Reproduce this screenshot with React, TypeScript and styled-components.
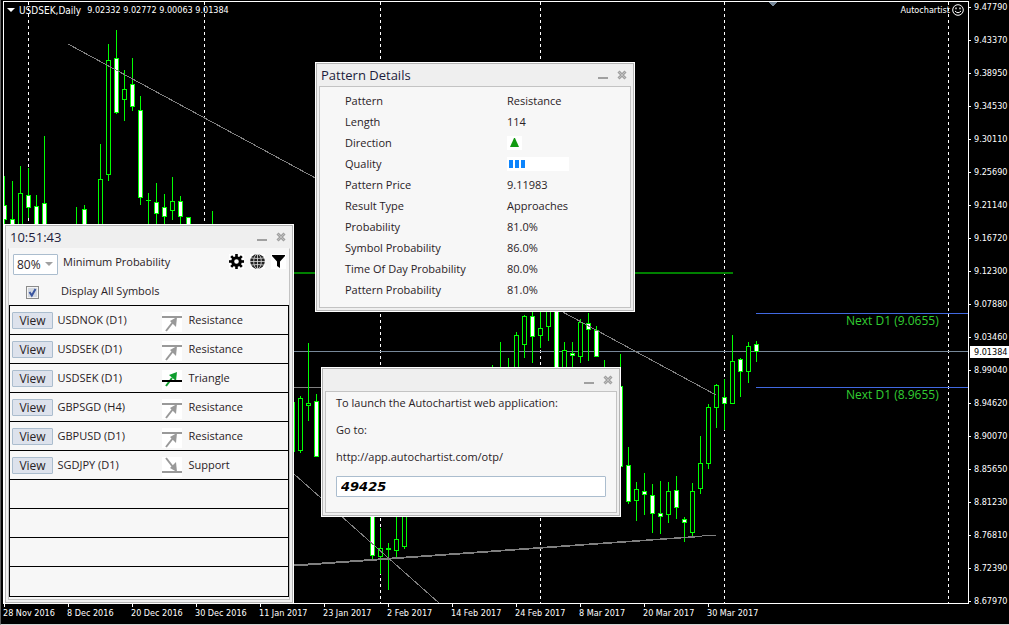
import React from 'react';
import styled, { createGlobalStyle } from 'styled-components';

const UI_FONT = "'Open Sans', 'Noto Sans', sans-serif";
const AXIS_FONT = "'DejaVu Sans Condensed', 'DejaVu Sans', sans-serif";

const GlobalStyle = createGlobalStyle`
  *, *::before, *::after { box-sizing: border-box; }
  html, body { margin: 0; background: #000; }
`;

/* ---------- chart ---------- */

type Candle = [x: number, high: number, low: number, top: number, bottom: number, bear?: 1];

const CANDLES: Candle[] = [
  [4, 176, 260, 205, 220, 1], [12, 181, 260, 219, 260, 1], [20, 166, 260, 193, 260],
  [28, 168, 218, 195, 208, 1], [36, 195, 260, 206, 260, 1], [44, 136, 260, 203, 260, 1],
  [76, 207, 260, 240, 260], [84, 205, 260, 209, 260, 1], [100, 144, 260, 179, 260],
  [108, 44, 181, 60, 175], [116, 30, 114, 58, 113, 1], [124, 70, 121, 89, 100],
  [132, 58, 111, 84, 107, 1], [140, 96, 205, 110, 198, 1], [148, 193, 260, 200, 201],
  [156, 183, 260, 202, 214, 1], [164, 194, 260, 207, 217, 1], [172, 177, 220, 201, 211],
  [180, 196, 260, 201, 217, 1], [188, 217, 260, 217, 260, 1], [212, 211, 260, 240, 260],
  [292, 390, 460, 402, 452], [300, 396, 453, 398, 451], [308, 343, 421, 403, 406],
  [316, 394, 457, 401, 457, 1], [372, 480, 559, 490, 556, 1], [380, 528, 574, 548, 557],
  [388, 543, 590, 548, 550], [396, 480, 559, 539, 551], [404, 480, 549, 490, 547],
  [492, 365, 400, 380, 390], [500, 342, 400, 380, 390], [508, 358, 400, 380, 390],
  [516, 332, 400, 335, 390], [524, 315, 358, 316, 345], [532, 300, 363, 316, 337, 1],
  [540, 300, 348, 328, 336], [548, 300, 341, 305, 327], [556, 300, 400, 305, 390, 1],
  [564, 342, 400, 350, 390], [572, 342, 400, 353, 356, 1], [580, 319, 363, 322, 357],
  [588, 313, 361, 323, 330, 1], [596, 326, 357, 330, 357, 1], [604, 360, 400, 380, 390],
  [620, 354, 467, 386, 467, 1], [628, 447, 504, 465, 502, 1], [636, 482, 521, 489, 501],
  [644, 473, 515, 491, 495, 1], [652, 484, 533, 495, 514, 1], [660, 481, 534, 513, 517, 1],
  [668, 482, 523, 491, 515], [676, 476, 519, 490, 508, 1], [684, 517, 542, 519, 523, 1],
  [692, 483, 538, 491, 533], [700, 436, 494, 463, 489], [708, 404, 469, 407, 464],
  [716, 384, 428, 385, 408], [724, 379, 430, 397, 404, 1], [732, 335, 404, 361, 404],
  [740, 358, 397, 359, 372, 1], [748, 342, 383, 346, 372], [756, 341, 362, 344, 352, 1],
];

const SEPARATORS = [28, 204, 380, 540, 724, 948];

const PRICES = [
  '9.47790', '9.43370', '9.38950', '9.34530', '9.30110', '9.25690', '9.21140', '9.16720', '9.12300',
  '9.07880', '9.03460', '8.99040', '8.94620', '8.90070', '8.85650', '8.81230', '8.76810', '8.72390', '8.67970',
];

const DATES = [
  '28 Nov 2016', '8 Dec 2016', '20 Dec 2016', '30 Dec 2016', '11 Jan 2017', '23 Jan 2017',
  '2 Feb 2017', '14 Feb 2017', '24 Feb 2017', '8 Mar 2017', '20 Mar 2017', '30 Mar 2017',
];

const Terminal = styled.main`
  position: relative;
  display: grid;
  grid-template-columns: minmax(0, 1fr) 40px;
  grid-template-rows: minmax(602px, 1fr) 20px;
  min-height: 100vh;
  padding: 1px 0 0 2px;
  overflow: hidden;
  border-left: 1px solid #5f5f5f;
  border-bottom: 1px solid #d4d4d4;
  background: #000;
  color: #fff;
  font: 9px/13px ${AXIS_FONT};
`;

const Plot = styled.section`
  position: relative;
  border: 1px solid #fff;
  overflow: hidden;
`;

const ChartSvg = styled.svg`
  position: absolute;
  inset: 0;
  width: 100%;
  height: 100%;
`;

const PlotHeader = styled.header`
  position: relative;
  display: flex;
  align-items: center;
  height: 16px;
  padding: 0 4px 0 3px;
  white-space: pre;
`;

const Expert = styled.div`
  display: flex;
  align-items: center;
  gap: 2px;
  margin-left: auto;
`;

const HeaderTitle = styled.h1`
  margin: 0 6px 0 4px;
  font: inherit;
  font-size: 10px;
`;

const PriceAxis = styled.div`
  position: relative;
  grid-row: 1 / -1;
  grid-column: 2;
  overflow: hidden;
`;

const PriceTick = styled.div`
  display: flex;
  align-items: center;
  gap: 3px;
  height: 12px;

  & + & { margin-top: 21px; }

  &::before {
    content: '';
    width: 2px;
    height: 1px;
    background: #fff;
  }
`;

const CurrentPrice = styled.output`
  position: absolute;
  top: 345px;
  left: 1px;
  right: 0;
  padding-left: 4px;
  background: #fff;
  color: #000;
  line-height: 12px;
`;

const TimeAxis = styled.div`
  grid-row: 2;
  grid-column: 1;
  display: flex;
  overflow: hidden;
`;

const TimeTick = styled.div`
  flex: 0 0 64px;
  white-space: nowrap;

  &::before {
    content: '';
    display: block;
    width: 1px;
    height: 3px;
    margin-left: 1px;
    background: #fff;
  }
`;

function CandleMark({ candle }: { candle: Candle }) {
  const [x, high, low, top, bottom, bear] = candle;
  return (
    <g>
      <rect x={x} y={high} width={1} height={low - high} fill="#0f0" />
      <rect x={x - 2} y={top} width={5} height={bottom - top} fill="#0f0" />
      {bottom - top > 2 && (
        <rect x={x - 1} y={top + 1} width={3} height={bottom - top - 2} fill={bear ? '#fff' : '#000'} />
      )}
    </g>
  );
}

function Chart() {
  return (
    <ChartSvg aria-hidden="true">
      <g transform="translate(-4 -2)" shapeRendering="crispEdges">
        {SEPARATORS.map((x) => (
          <line key={x} x1={x + 0.5} x2={x + 0.5} y1={2} y2="110%" stroke="#fff" strokeDasharray="3 3" />
        ))}
        <rect x={4} y={351} width="100%" height={1} fill="#778899" />
        <rect x={4} y={387} width={320} height={1} fill="#808080" />
        {CANDLES.map((c) => <CandleMark key={c[0]} candle={c} />)}
        <rect x={4} y={272} width={729} height={2} fill="#008000" />
        <rect x={756} y={313} width="100%" height={1} fill="#4169e1" />
        <rect x={756} y={387} width="100%" height={1} fill="#4169e1" />
        <g stroke="#808080">
          <line x1={68} y1={44} x2={716} y2={395} />
          <line x1={294} y1={474} x2={439} y2={603} />
          <line x1={294} y1={565} x2={716} y2={535} />
          <line x1={294} y1={566} x2={695} y2={537} />
        </g>
        <path d="M769 2h8l-4 5z" fill="#778899" />
      </g>
      <g fill="#32cd32" fontFamily={UI_FONT} fontSize={12}>
        <text x={842} y={323}>Next D1 (9.0655)</text>
        <text x={842} y={397}>Next D1 (8.9655)</text>
      </g>
    </ChartSvg>
  );
}

function Smiley() {
  return (
    <svg width="12" height="12" viewBox="0 0 12 12" fill="none" stroke="#fff" aria-hidden="true">
      <circle cx="6" cy="6" r="5.3" />
      <path d="M3 7q3 3.4 6 0" />
      <path d="M4 3.6v1.6M8 3.6v1.6" strokeWidth="1.3" />
    </svg>
  );
}

/* ---------- floating windows ---------- */

const Frame = styled.section<{ $x: number; $y: number; $w: number }>`
  position: absolute;
  left: ${(p) => p.$x}px;
  top: ${(p) => p.$y}px;
  width: ${(p) => p.$w}px;
  padding: 0 2px 2px;
  border: 1px solid #b4b4b4;
  outline: 1px solid #fff;
  background: #efefef;
  color: #2a2226;
  font: 11px/15px ${UI_FONT};
`;

const TitleBar = styled.header`
  display: flex;
  align-items: center;
  gap: 9px;
  height: 22px;
  padding: 0 4px 0 2px;
`;

const Title = styled.h2`
  flex: 1;
  margin: 0;
  color: #1c1c3c;
  font-size: 13px;
  font-weight: 400;
  line-height: 18px;
`;

const TitleButton = styled.button`
  display: flex;
  padding: 0;
  border: 0;
  background: none;
  color: #a0a0a0;
`;

const Pane = styled.div<{ $open?: boolean }>`
  border: 1px solid #c3c3c3;
  border-top-color: ${(p) => (p.$open ? '#f7f7f7' : '#c3c3c3')};
  background: #f7f7f7;
`;

function FloatingWindow(props: {
  title: string; label?: string; x: number; y: number; w: number; open?: boolean; children: React.ReactNode;
}) {
  return (
    <Frame $x={props.x} $y={props.y} $w={props.w} aria-label={props.label ?? props.title}>
      <TitleBar>
        <Title>{props.title}</Title>
        <TitleButton aria-label="Minimize">
          <svg width="10" height="10" viewBox="0 0 10 10"><path d="M0 7h10v2H0z" fill="currentColor" /></svg>
        </TitleButton>
        <TitleButton aria-label="Close">
          <svg width="10" height="10" viewBox="0 0 10 10">
            <path d="M1.5 1.5l7 7m0-7l-7 7" stroke="currentColor" strokeWidth="3" />
            <path d="M2 2l6 6m0-6L2 8" stroke="#d2d2d2" strokeWidth="0.6" />
          </svg>
        </TitleButton>
      </TitleBar>
      <Pane $open={props.open}>{props.children}</Pane>
    </Frame>
  );
}

/* ---------- pattern list ---------- */

const Filters = styled.div`
  display: flex;
  align-items: flex-start;
  height: 31px;
  padding: 5px 3px 0 4px;
`;

const SelectBox = styled.div`
  position: relative;
  width: 45px;
  height: 21px;
  margin-right: 5px;

  svg {
    position: absolute;
    top: 8px;
    right: 5px;
    pointer-events: none;
  }
`;

const Select = styled.select`
  appearance: none;
  width: 100%;
  height: 100%;
  padding: 0 0 0 3px;
  border: 1px solid #abbdce;
  border-radius: 1px;
  background: #fff;
  color: #2a2226;
  font: 12px/19px ${UI_FONT};
`;

const ToolIcons = styled.div`
  display: flex;
  gap: 6px;
  margin-left: auto;
`;

const ToolButton = styled.button`
  display: flex;
  padding: 0;
  border: 0;
  background: #fff;
  color: #000;
`;

const CheckLine = styled.label`
  display: flex;
  align-items: flex-start;
  height: 25px;
  padding: 3px 0 0 17px;
  gap: 22px;
`;

const CheckMark = styled.span`
  position: relative;
  display: flex;
  margin-top: 3px;

  svg {
    position: absolute;
    inset: 0;
    pointer-events: none;
  }
`;

const Check = styled.input`
  appearance: none;
  width: 13px;
  height: 13px;
  margin: 0;
  border: 1px solid #8b8b8b;
  box-shadow: inset 0 0 0 1px #f4f4f4;
  background: #d3d8e0;
`;

const PatternTable = styled.table`
  width: 100%;
  table-layout: fixed;
  border-collapse: collapse;
  margin-bottom: 2px;
  border: 1px solid #000;
`;

const PatternRow = styled.tr`
  height: 29px;
  border-bottom: 1px solid #000;

  &:last-child { height: 30px; }
`;

const Cell = styled.td<{ $w?: number; $top?: number }>`
  width: ${(p) => (p.$w ? `${p.$w}px` : 'auto')};
  padding: ${(p) => (p.$top ? `${p.$top}px 0 0 2px` : '0 0 2px 2px')};
  text-align: left;
  vertical-align: middle;
  white-space: nowrap;

  svg { display: block; }
`;

const ViewButton = styled.button`
  display: block;
  width: 41px;
  height: 17px;
  padding: 0;
  border: 1px solid #abbdce;
  border-radius: 1px;
  background: #dde2ec;
  color: #2a2226;
  font: 12px/15px ${UI_FONT};
`;

type Kind = 'Resistance' | 'Support' | 'Triangle';

const PATTERNS: { symbol: string; kind: Kind }[] = [
  { symbol: 'USDNOK (D1)', kind: 'Resistance' },
  { symbol: 'USDSEK (D1)', kind: 'Resistance' },
  { symbol: 'USDSEK (D1)', kind: 'Triangle' },
  { symbol: 'GBPSGD (H4)', kind: 'Resistance' },
  { symbol: 'GBPUSD (D1)', kind: 'Resistance' },
  { symbol: 'SGDJPY (D1)', kind: 'Support' },
];
const EMPTY_ROWS = [0, 1, 2, 3];

function PatternIcon({ kind }: { kind: Kind }) {
  return (
    <svg width="20" height="20" viewBox="0 0 20 20" aria-hidden="true">
      <rect width="20" height="20" fill="#fff" />
      {kind === 'Resistance' && (
        <g fill="#999">
          <path d="M0 4h20v2H0z" />
          <path d="M4 19L11 10" stroke="#999" strokeWidth="2" />
          <path d="M15 5l-7 4 6 6z" />
        </g>
      )}
      {kind === 'Support' && (
        <g fill="#999">
          <path d="M0 14h20v2H0z" />
          <path d="M4 1L11 10" stroke="#999" strokeWidth="2" />
          <path d="M15 15l-7-4 6-6z" />
        </g>
      )}
      {kind === 'Triangle' && (
        <g fill="#0f9d2e">
          <path d="M4 16L10 8" stroke="#0f9d2e" strokeWidth="2" />
          <path d="M15 2l-8 3 7 6z" />
          <path d="M0 10h20v2H0z" fill="#000" />
        </g>
      )}
    </svg>
  );
}

const TEETH = [0, 45, 90, 135, 180, 225, 270, 315];

function PatternListWindow() {
  return (
    <FloatingWindow title="10:51:43" label="Pattern list" x={4} y={225} w={288} open>
      <Filters>
        <SelectBox>
          <Select id="min-probability" defaultValue="80">
            <option value="80">80%</option>
            <option value="70">70%</option>
          </Select>
          <svg width="8" height="4" viewBox="0 0 8 4"><path d="M0 0h8L4 4z" fill="#a0a0a0" /></svg>
        </SelectBox>
        <label htmlFor="min-probability">Minimum Probability</label>
        <ToolIcons>
          <ToolButton aria-label="Settings">
            <svg width="15" height="15" viewBox="0 0 15 15">
              <circle cx="7.500" cy="7.500" r="3.800" fill="none" stroke="currentColor" strokeWidth="3" />
              {TEETH.map((a) => (
                <rect key={a} x="6.200" y="0" width="2.600" height="3.500" fill="currentColor" transform={`rotate(${a} 7.500 7.500)`} />
              ))}
            </svg>
          </ToolButton>
          <ToolButton aria-label="Web">
            <svg width="15" height="15" viewBox="0 0 15 15" fill="none">
              <circle cx="7.500" cy="7.500" r="7.300" fill="#222" />
              <path d="M7.500 0v15M0 7.500h15M1 4q6.500 1 13 0M1 11q6.500-1 13 0" stroke="#ddd" strokeWidth="0.800" />
              <ellipse cx="7.500" cy="7.500" rx="3.800" ry="7.300" stroke="#ddd" strokeWidth="0.800" />
            </svg>
          </ToolButton>
          <ToolButton aria-label="Filter">
            <svg width="15" height="15" viewBox="0 0 15 15"><path d="M1 1h13v1L9 7.500V14l-3-2V7.500L1 2z" fill="currentColor" /></svg>
          </ToolButton>
        </ToolIcons>
      </Filters>
      <CheckLine>
        <CheckMark>
          <Check type="checkbox" defaultChecked />
          <svg width="13" height="13" viewBox="0 0 13 13"><path d="M3.500 6l2.300 3.500L9.500 3" fill="none" stroke="#3a559f" strokeWidth="2" /></svg>
        </CheckMark>
        Display All Symbols
      </CheckLine>
      <PatternTable>
        <tbody>
          {PATTERNS.map((p, i) => (
            <PatternRow key={i}>
              <Cell $w={46} $top={1}><ViewButton>View</ViewButton></Cell>
              <Cell $w={104}>{p.symbol}</Cell>
              <Cell $w={27} $top={4}><PatternIcon kind={p.kind} /></Cell>
              <Cell>{p.kind}</Cell>
            </PatternRow>
          ))}
          {EMPTY_ROWS.map((i) => (
            <PatternRow key={i}><Cell colSpan={4} /></PatternRow>
          ))}
        </tbody>
      </PatternTable>
    </FloatingWindow>
  );
}

/* ---------- pattern details ---------- */

const DetailsTable = styled.table`
  width: 100%;
  table-layout: fixed;
  border-collapse: collapse;
  margin: 3px 0 7px;
`;

const DetailLabel = styled.th`
  width: 187px;
  height: 21px;
  padding: 0 0 0 25px;
  font-weight: 400;
  text-align: left;
`;

const DetailValue = styled.td`
  padding: 0;

  svg { display: block; }
`;

const DETAILS: [string, React.ReactNode][] = [
  ['Pattern', 'Resistance'],
  ['Length', '114'],
  ['Direction', (
    <svg width="15" height="14" viewBox="0 0 15 14" role="img" aria-label="Up">
      <path d="M0 0h15v14H0z" fill="#fff" />
      <path d="M7 2h1l4 9H3z" fill="#129a12" />
    </svg>
  )],
  ['Quality', (
    <svg width="62" height="14" viewBox="0 0 62 14" role="img" aria-label="3 bars">
      <path d="M0 0h62v14H0z" fill="#fff" />
      <path d="M2 3h4v8H2zM8 3h4v8H8zM14 3h4v8h-4z" fill="#0c84fc" />
    </svg>
  )],
  ['Pattern Price', '9.11983'],
  ['Result Type', 'Approaches'],
  ['Probability', '81.0%'],
  ['Symbol Probability', '86.0%'],
  ['Time Of Day Probability', '80.0%'],
  ['Pattern Probability', '81.0%'],
];

function DetailsWindow() {
  return (
    <FloatingWindow title="Pattern Details" x={315} y={63} w={318}>
      <DetailsTable>
        <tbody>
          {DETAILS.map(([label, value]) => (
            <tr key={label}>
              <DetailLabel scope="row">{label}</DetailLabel>
              <DetailValue>{value}</DetailValue>
            </tr>
          ))}
        </tbody>
      </DetailsTable>
    </FloatingWindow>
  );
}

/* ---------- web login ---------- */

const LaunchBody = styled.div`
  display: flex;
  flex-direction: column;
  gap: 12px;
  padding: 3px 10px 15px 10px;
`;

const Line = styled.p`
  margin: 0;
`;

const CodeInput = styled.input`
  width: 100%;
  height: 21px;
  padding: 0 4px;
  border: 1px solid #abbdce;
  border-radius: 1px;
  background: #fff;
  color: #000;
  font: italic 700 13px/19px 'DejaVu Sans', sans-serif;
`;

function LaunchWindow() {
  return (
    <FloatingWindow title="" label="Web application" x={321} y={368} w={298}>
      <LaunchBody>
        <Line>To launch the Autochartist web application:</Line>
        <Line>Go to:</Line>
        <Line>http://app.autochartist.com/otp/</Line>
        <CodeInput aria-label="One-time code" defaultValue="49425" />
      </LaunchBody>
    </FloatingWindow>
  );
}

export default function App() {
  return (
    <>
      <GlobalStyle />
      <Terminal>
        <Plot>
          <Chart />
          <PlotHeader>
            <svg width="8" height="4" viewBox="0 0 8 4" aria-hidden="true"><path d="M0 0h8L4 4z" fill="#fff" /></svg>
            <HeaderTitle>USDSEK,Daily</HeaderTitle>
            <span>9.02332 9.02772 9.00063 9.01384</span>
            <Expert>Autochartist<Smiley /></Expert>
          </PlotHeader>
        </Plot>
        <PriceAxis>
          {PRICES.map((p) => <PriceTick key={p}>{p}</PriceTick>)}
          <CurrentPrice>9.01384</CurrentPrice>
        </PriceAxis>
        <TimeAxis>
          {DATES.map((d) => <TimeTick key={d}>{d}</TimeTick>)}
        </TimeAxis>
        <PatternListWindow />
        <DetailsWindow />
        <LaunchWindow />
      </Terminal>
    </>
  );
}
